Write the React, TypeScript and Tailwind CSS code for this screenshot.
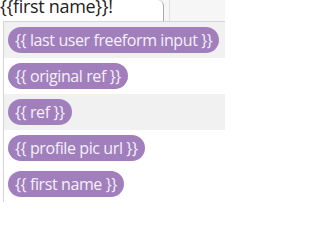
import React from 'react';

const variables = [
  'last user freeform input',
  'original ref',
  'ref',
  'profile pic url',
  'first name',
];

export default function App() {
  return (
    <div
      className="w-[225px] h-[221px] bg-white overflow-hidden"
      style={{ fontFamily: '"Open Sans", "Noto Sans", sans-serif' }}
    >
      {/* Editor row */}
      <div className="flex h-[21px] bg-[#f6f6f6]">
        <div className="w-[164px] h-[21px] bg-white border-r border-[#a8a8a8] rounded-tr-[6px] overflow-hidden">
          <div className="text-[18px] leading-[22px] -mt-[5px] text-[#222] tracking-[-0.3px] whitespace-nowrap">
            {'{{'}first name{'}}'}!
          </div>
        </div>
        <div className="w-[5px]" />
        <div className="w-px bg-[#e2e2e2]" />
      </div>

      {/* Suggestions dropdown */}
      <div className="ml-[3px] border-l border-t border-[#d4d4d4] flex flex-col">
        {variables.map((v, i) => (
          <div
            key={v}
            className={`h-[36px] flex items-center pl-[4px] ${i === 0 || i === 2 ? 'bg-[#f1f1f1]' : 'bg-white'}`}
          >
            <span className="h-[26px] px-[7px] rounded-full bg-[#a17fbc] text-[#f6f0fa] text-[16px] leading-[26px] tracking-[-0.4px] whitespace-nowrap">
              {'{{ '}{v}{' }}'}
            </span>
          </div>
        ))}
      </div>
    </div>
  );
}
